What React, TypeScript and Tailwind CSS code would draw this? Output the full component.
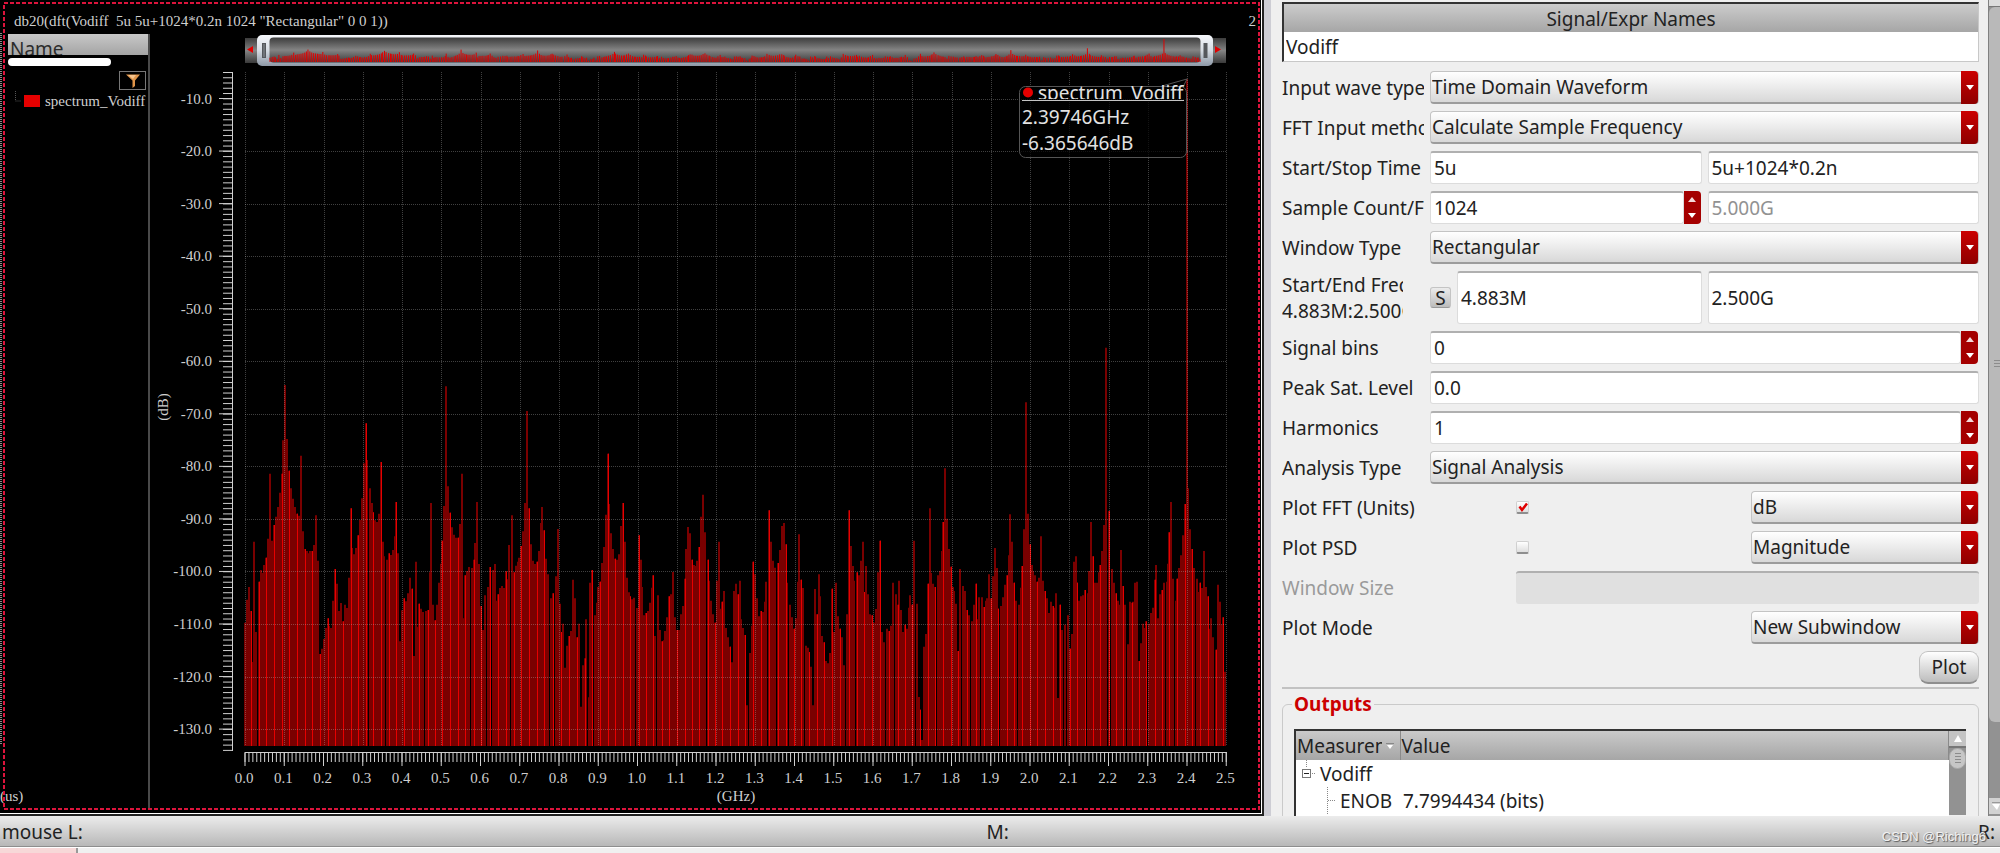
import React from "react";

/* Spectrum lines as "x:top" pairs in thirds of a chart unit, measured from (230, 330). */
const BINS = `45:875 52:806 58:768 62:840 68:993 73:632 79:903 86:752 92:717 96:726 102:702 108:680 114:623 120:428 126:629 131:582 137:557 143:528 149:485 155:428 160:328 165:162 171:324 177:419 183:472 189:503 195:528 200:548 206:554 212:374 218:601 224:654 231:660 235:667 241:660 247:660 253:642 259:553 263:689 269:969 275:953 281:924 287:891 293:862 297:884 303:891 309:809 316:714 322:758 328:840 332:816 338:871 344:821 350:831 356:740 362:532 366:651 373:670 379:651 385:613 391:567 397:502 401:397 407:277 412:387 420:472 426:516 430:544 436:568 442:573 448:548 454:393 460:632 463:676 470:686 476:667 483:672 489:657 495:616 499:513 505:667 511:931 517:838 523:802 529:811 534:787 540:740 546:773 552:975 558:692 563:887 567:818 573:833 580:843 587:840 593:837 599:724 602:516 608:821 614:868 620:821 627:755 632:698 637:629 643:525 649:166 655:466 661:545 666:589 671:611 677:620 684:620 690:579 697:428 700:862 706:733 712:720 718:708 725:711 731:686 735:636 741:513 747:699 753:825 759:897 766:793 774:768 781:708 788:717 794:699 797:809 804:790 810:771 817:765 823:771 829:721 832:745 838:642 845:553 851:724 857:704 863:692 868:680 873:645 879:601 885:516 891:240 897:532 902:640 908:689 914:699 921:692 927:660 933:576 937:528 942:598 948:683 955:730 962:802 968:787 977:736 984:594 989:818 994:903 998:878 1004:1010 1011:944 1018:915 1024:900 1030:746 1034:802 1040:919 1046:878 1052:1127 1059:1003 1065:982 1069:865 1076:1099 1081:755 1087:717 1094:853 1100:815 1104:768 1109:752 1115:696 1121:648 1129:551 1134:368 1137:519 1143:607 1149:654 1156:683 1162:686 1166:670 1172:585 1178:516 1184:632 1191:740 1197:784 1201:796 1207:805 1213:800 1220:831 1226:613 1232:686 1235:768 1242:853 1248:846 1254:840 1261:815 1267:770 1270:733 1276:915 1283:793 1289:897 1296:931 1302:928 1305:900 1312:859 1318:796 1323:790 1329:723 1335:859 1340:897 1346:897 1352:850 1358:825 1364:743 1368:654 1373:588 1379:607 1385:686 1391:702 1397:705 1402:689 1408:648 1414:557 1420:491 1426:604 1433:686 1436:749 1443:809 1449:850 1455:875 1461:749 1468:632 1471:833 1477:812 1483:780 1489:891 1495:919 1501:947 1506:994 1513:780 1519:758 1525:790 1531:749 1534:865 1539:891 1546:912 1552:1123 1560:966 1566:884 1569:692 1575:730 1581:802 1587:856 1594:840 1599:843 1604:812 1609:752 1616:538 1623:632 1629:689 1636:710 1643:696 1650:657 1656:585 1663:576 1669:640 1672:755 1679:821 1685:859 1691:893 1697:862 1704:752 1707:610 1714:746 1720:771 1727:944 1733:950 1736:963 1742:1007 1748:1123 1754:774 1760:850 1767:730 1770:796 1777:915 1783:934 1789:990 1795:997 1801:966 1805:773 1811:903 1817:755 1824:856 1830:893 1837:919 1843:1003 1851:850 1857:538 1864:645 1870:705 1873:749 1880:724 1887:733 1893:689 1899:632 1902:783 1908:705 1915:790 1921:850 1927:853 1933:875 1937:834 1943:724 1950:629 1956:903 1963:934 1970:893 1977:900 1984:884 1990:755 1997:790 2003:821 2006:749 2012:837 2018:903 2024:881 2030:893 2037:830 2041:793 2047:821 2053:629 2060:818 2066:1098 2071:1136 2075:1227 2081:947 2088:909 2095:758 2101:532 2103:726 2109:758 2116:768 2123:733 2129:720 2135:660 2138:573 2144:412 2150:563 2157:654 2163:707 2169:768 2173:780 2179:818 2185:960 2191:714 2198:765 2205:780 2211:837 2217:853 2226:871 2232:821 2238:758 2241:865 2248:799 2255:799 2261:828 2268:809 2272:802 2277:730 2283:802 2289:736 2295:651 2301:711 2305:833 2312:825 2318:799 2325:761 2331:733 2337:673 2340:550 2346:632 2352:755 2359:809 2366:821 2372:770 2375:705 2381:595 2387:214 2393:548 2399:640 2405:702 2408:720 2415:733 2422:752 2428:740 2434:616 2440:749 2444:780 2450:802 2456:846 2462:812 2468:825 2472:830 2478:787 2485:1101 2491:821 2497:897 2505:881 2513:853 2519:953 2526:909 2532:692 2538:676 2541:755 2547:809 2553:796 2560:793 2566:777 2573:787 2576:720 2582:573 2589:676 2595:755 2601:755 2607:724 2610:702 2617:660 2623:582 2629:50 2636:540 2638:657 2645:714 2652:755 2658:787 2664:809 2670:821 2673:657 2679:765 2686:821 2693:940 2699:812 2706:815 2709:812 2715:755 2720:752 2726:990 2733:937 2739:878 2742:891 2749:871 2756:878 2762:846 2768:830 2774:746 2777:702 2783:862 2790:790 2796:777 2803:755 2810:752 2813:698 2818:604 2824:513 2830:743 2837:809 2841:743 2847:711 2853:673 2859:613 2866:519 2871:-756 2875:472 2881:595 2887:654 2893:711 2900:743 2906:783 2911:755 2917:771 2922:660 2928:768 2934:796 2941:893 2943:862 2950:919 2957:956 2963:761 2970:812 2976:881 2979:859 2985:1022`
  .split(" ")
  .map((p) => p.split(":").map(Number))
  .map(([x, y]) => ({ x: 230 + x / 3, y: 330 + y / 3 }));

const FLOOR = 745;
const LEFT = 245;
const STEP_X = 39.25;
const TOP_10 = 97.5;
const STEP_Y = 52.55;

/* Every line is a dim pair of columns; every fourth also gets a full-strength core. */
const dimPath = BINS.map((b) => `M${Math.round(b.x)} ${b.y}V${FLOOR}`).join("");
const brightPath = BINS.filter((_, i) => i % 4 === 3)
  .map((b) => `M${Math.round(b.x) + 0.5} ${b.y}V${FLOOR}`)
  .join("");
const miniPath = BINS.map(
  (b) => `M${270 + (b.x - LEFT) * 0.949} ${61 - (FLOOR - b.y) * 0.0345}V61`
).join("");

const yMinor = Array.from({ length: 130 }, (_, i) => 71.5 + i * 5.255)
  .filter((y) => y < 750)
  .map((y) => `M223 ${y}H232`)
  .join("");
const yLabels = Array.from({ length: 13 }, (_, i) => i);
const xLabels = Array.from({ length: 26 }, (_, i) => i);
const xMinor = Array.from({ length: 251 }, (_, i) => `M${LEFT + i * 3.925} 752V761`).join("");
const xMajor = xLabels.map((i) => `M${LEFT + i * STEP_X} 752V765`).join("");
const yMajor = yLabels.map((i) => `M219 ${TOP_10 + i * STEP_Y}H232`).join("");
const vGrid = xLabels.map((i) => `M${Math.round(LEFT + i * STEP_X) + 0.5} 71V745`).join("");
const hGrid = yLabels.map((i) => `M245 ${Math.round(TOP_10 + i * STEP_Y) + 0.5}H1227`).join("");

const serif = "font-['Liberation_Serif',serif]";
const sans = "font-['Noto_Sans',sans-serif]";

function Chart() {
  return (
    <svg viewBox="154 28 1102 778" className="h-full w-full" role="img" aria-label="Spectrum of Vodiff">
      <defs>
        <linearGradient id="track" x1="0" y1="0" x2="0" y2="1">
          <stop offset="0" stopColor="#3c3c3c" />
          <stop offset="0.5" stopColor="#848484" />
          <stop offset="1" stopColor="#3a3a3a" />
        </linearGradient>
        <linearGradient id="frame" x1="0" y1="0" x2="0" y2="1">
          <stop offset="0" stopColor="#f6f8fc" />
          <stop offset="0.5" stopColor="#d5dbe2" />
          <stop offset="1" stopColor="#8d98a6" />
        </linearGradient>
        <clipPath id="nameClip">
          <rect x="1020" y="80" width="166" height="18" />
        </clipPath>
      </defs>

      <rect x="245" y="37" width="981" height="25" fill="url(#track)" />
      <path d="M253 45v7l-6-3.500z" fill="#e00000" />
      <path d="M1215 45v7l6-3.500z" fill="#e00000" />
      <rect x="257" y="34" width="956" height="31" rx="5" fill="url(#frame)" />
      <rect x="269.500" y="36.500" width="931" height="25" rx="4" fill="url(#track)" />
      <path d={miniPath} stroke="#e00000" strokeWidth="1" />
      <rect x="262" y="42" width="4" height="15" fill="#55585c" />
      <path d="M264 43v13" stroke="#8b9096" />
      <rect x="1203.500" y="42" width="4" height="15" fill="#55585c" />

      <path d={dimPath} stroke="#7a0000" strokeWidth="2" />
      <path d={brightPath} stroke="#e60000" strokeWidth="1" />
      <g stroke="#c8c8c8" strokeOpacity="0.32" strokeWidth="1" strokeDasharray="1 1">
        <path d={vGrid} />
        <path d={hGrid} />
      </g>

      <g stroke="#d0d0d0">
        <path d={yMinor} strokeWidth="1" />
        <path d={yMajor} strokeWidth="1" />
        <path d="M232.500 71V750" strokeWidth="1" />
        <path d={xMinor} strokeWidth="1" />
        <path d={xMajor} strokeWidth="1" />
        <path d="M244.500 751.500H1227" strokeWidth="1" />
      </g>

      <g fill="#cfcfcf" fontSize="15" className={serif}>
        {yLabels.map((i) => (
          <text key={i} x="212" y={TOP_10 + i * STEP_Y + 5} textAnchor="end">
            {`-${(i + 1) * 10}.0`}
          </text>
        ))}
        {xLabels.map((i) => (
          <text key={i} x={LEFT + i * STEP_X - 1} y="782" textAnchor="middle">
            {(i / 10).toFixed(1)}
          </text>
        ))}
        <text x="736" y="800" textAnchor="middle">(GHz)</text>
        <text transform="translate(168 406) rotate(-90)" textAnchor="middle">(dB)</text>
      </g>

      <path d="M1162 85L1187 78L1183 86" fill="none" stroke="#555" />
      <rect x="1019.500" y="85.500" width="167" height="71" rx="6" fill="#000" fillOpacity="0.7" stroke="#555" />
      <circle cx="1028" cy="91.500" r="5" fill="#e60000" />
      <g fill="#e2e2e2" fontSize="19" className={sans}>
        <text x="1038" y="99" clipPath="url(#nameClip)">spectrum_Vodiff</text>
        <text x="1022" y="123">2.39746GHz</text>
        <text x="1022" y="149">-6.365646dB</text>
      </g>
      <path d="M1022 99.500H1184" stroke="#c4c4c4" />
    </svg>
  );
}

const raised = "rounded border border-[#c4c4c4] border-b-2 border-b-[#9c9c9c] bg-linear-to-b from-white to-[#d8d8d8]";
const sunken =
  "min-w-0 rounded-[3px] border border-[#dcdcdc] border-t-2 border-t-[#b0b0b0] bg-white pl-[3px] text-[#222] outline-none";

function Select({ id, value }: { id: string; value: string }) {
  return (
    <div className="relative h-[33px] min-w-0 flex-1">
      <select id={id} defaultValue={value} className={`h-full w-full appearance-none pr-5 pl-px outline-none ${raised}`}>
        <option>{value}</option>
      </select>
      <span className="pointer-events-none absolute inset-y-0 right-px flex w-[17px] items-center justify-center rounded-r bg-linear-to-b from-[#cc0000] to-[#8e0000]">
        <svg viewBox="0 0 8 5" className="h-[5px] w-2">
          <path d="M0 0h8L4 5z" fill="#fff" />
        </svg>
      </span>
    </div>
  );
}

function Spin({ id, value }: { id: string; value: string }) {
  return (
    <div className="flex h-[33px] min-w-0 flex-1 pr-px">
      <input id={id} defaultValue={value} className={`flex-1 ${sunken}`} />
      <div className="flex w-[17px] flex-col rounded-r bg-[#a50000]">
        <button type="button" aria-label="Increase" className="flex flex-1 items-center justify-center">
          <svg viewBox="0 0 8 5" className="h-[5px] w-2">
            <path d="M0 5h8L4 0z" fill="#f4dada" />
          </svg>
        </button>
        <button type="button" aria-label="Decrease" className="flex flex-1 items-center justify-center">
          <svg viewBox="0 0 8 5" className="h-[5px] w-2">
            <path d="M0 0h8L4 5z" fill="#fff" />
          </svg>
        </button>
      </div>
    </div>
  );
}

function Row({ id, label, children }: { id: string; label: string; children: React.ReactNode }) {
  return (
    <div className="flex items-center gap-1.5">
      <label htmlFor={id} className="w-[142px] shrink-0 overflow-hidden whitespace-nowrap">
        {label}
      </label>
      {children}
    </div>
  );
}

function Pair({ children }: { children: React.ReactNode }) {
  return <div className="grid min-w-0 flex-1 grid-cols-2 gap-1.5">{children}</div>;
}

function Check({ id, checked = false }: { id: string; checked?: boolean }) {
  return (
    <span className="relative block size-[13px]">
      <input
        id={id}
        type="checkbox"
        defaultChecked={checked}
        className="peer block size-[13px] appearance-none rounded-[2px] border border-[#d0d0d0] border-b-2 border-b-[#8e8e8e] bg-linear-to-b from-white to-[#dedede]"
      />
      <svg viewBox="0 0 13 13" className="pointer-events-none absolute inset-0 hidden size-[13px] peer-checked:block">
        <path d="M3.500 5.500L6 9L11 2.500" fill="none" stroke="#e00000" strokeWidth="2.500" />
      </svg>
    </span>
  );
}

function UnitRow({ id, label, value, checked }: { id: string; label: string; value: string; checked?: boolean }) {
  return (
    <div className="flex items-center">
      <label htmlFor={id} className="w-[234px] shrink-0">
        {label}
      </label>
      <div className="flex flex-1">
        <Check id={id} checked={checked} />
      </div>
      <div className="flex w-[228px]">
        <Select id={`${id}-unit`} value={value} />
      </div>
    </div>
  );
}

export default function App() {
  return (
    <div className={`flex h-screen flex-col overflow-hidden bg-[#efefef] text-[19px] leading-[26px] text-[#222] ${sans}`}>
      <main className="flex min-h-0 flex-1">
        <section className="relative flex w-[63.2%] flex-col border-r-2 border-b-2 border-[#222] bg-black pr-1.5 pb-1.5 text-[#cfcfcf]">
          <svg className="pointer-events-none absolute inset-0 h-full w-full">
            <rect
              x="4"
              y="3"
              className="h-[calc(100%-8px)] w-[calc(100%-7px)]"
              fill="none"
              stroke="#dc143c"
              strokeWidth="2"
              strokeDasharray="4 2"
            />
            <path d="M1 33V745" stroke="#8a8a8a" strokeWidth="2" strokeDasharray="1 1" />
          </svg>
          <div className="absolute inset-y-0 right-0 w-px bg-white" />
          <div className="absolute inset-x-0 bottom-0 h-px bg-white" />
          <header className={`flex h-[34px] justify-between pt-[11px] pl-3.5 text-[15px] leading-5 ${serif}`}>
            <h1 className="whitespace-pre">{'db20(dft(Vodiff  5u 5u+1024*0.2n 1024 "Rectangular" 0 0 1))'}</h1>
            <span>2</span>
          </header>
          <div className="flex min-h-0 flex-1">
            <aside className="flex w-[150px] shrink-0 flex-col border-r-2 border-[#4a4a4a] pl-2">
              <div className="h-[21px] overflow-hidden bg-linear-to-b from-[#c8c8c8] to-[#a4a4a4] pt-0.5 pl-0.5 text-[#2c2c2c]">
                Name
              </div>
              <div className="mt-[3px] h-2 w-[103px] rounded-full bg-white" />
              <button aria-label="Filter" className="mt-[5px] mr-0.5 flex h-[19px] w-[27px] items-center justify-center self-end border border-[#777]">
                <svg viewBox="0 0 14 14" className="size-3.5">
                  <path d="M0 0.500h14L9 6.500V12L6.500 14V6.500z" fill="#e0954a" />
                  <path d="M2 1h8L7 5z" fill="#f6c48c" />
                </svg>
              </button>
              <div className="flex items-center pt-px">
                <svg viewBox="0 0 16 20" className="h-5 w-4">
                  <path d="M7.500 0v10h6" fill="none" stroke="#555" strokeDasharray="1 1" />
                </svg>
                <span className="h-3 w-4 bg-[#e60000]" />
                <span className={`pl-[5px] text-[15px] leading-5 ${serif}`}>spectrum_Vodiff</span>
              </div>
              <div className={`mt-auto -ml-2 pb-0.5 text-[15px] leading-5 ${serif}`}>(us)</div>
            </aside>
            <div className="-mt-1.5 min-w-0 flex-1 pl-1">
              <Chart />
            </div>
          </div>
        </section>

        <section className="flex min-w-0 flex-1 border-l-[7px] border-[#cdcdd4]">
          <form className="flex min-w-0 flex-1 flex-col gap-[7px] overflow-hidden pt-0.5 pr-[9px] pl-[11px]">
            <div className="mb-0.5 border-t-2 border-r border-b border-l-2 border-[#c8c8c8] border-t-[#333] border-l-[#333]">
              <div className="bg-linear-to-b from-[#cccccc] to-[#a6a6a6] pt-0.5 text-center">
                <label htmlFor="expr">Signal/Expr Names</label>
              </div>
              <input id="expr" defaultValue="Vodiff" className="block h-[29px] w-full bg-white pl-0.5 outline-none" />
            </div>
            <Row id="wave" label="Input wave type">
              <Select id="wave" value="Time Domain Waveform" />
            </Row>
            <Row id="method" label="FFT Input method">
              <Select id="method" value="Calculate Sample Frequency" />
            </Row>
            <Row id="start" label="Start/Stop Time">
              <Pair>
                <input id="start" defaultValue="5u" className={`h-[33px] ${sunken}`} />
                <input aria-label="Stop Time" defaultValue="5u+1024*0.2n" className={`h-[33px] ${sunken}`} />
              </Pair>
            </Row>
            <Row id="count" label="Sample Count/Freq">
              <Pair>
                <Spin id="count" value="1024" />
                <input
                  aria-label="Sample frequency"
                  disabled
                  defaultValue="5.000G"
                  className={`h-[33px] ${sunken} disabled:text-[#929292]`}
                />
              </Pair>
            </Row>
            <Row id="window" label="Window Type">
              <Select id="window" value="Rectangular" />
            </Row>
            <div className="flex items-center gap-1.5">
              <div className="w-[142px] shrink-0">
                <label htmlFor="fstart" className="block w-[121px] overflow-hidden whitespace-nowrap">
                  Start/End Freq
                  <br />
                  4.883M:2.500G
                </label>
              </div>
              <Pair>
                <div className="flex min-w-0 items-center gap-1.5">
                  <button type="button" className="flex size-[21px] items-center justify-center rounded-[3px] border border-[#c4c4c4] border-b-[#999] bg-linear-to-b from-[#ececec] to-[#bcbcbc]">
                    S
                  </button>
                  <input id="fstart" defaultValue="4.883M" className={`h-[53px] flex-1 ${sunken}`} />
                </div>
                <input aria-label="End frequency" defaultValue="2.500G" className={`h-[53px] ${sunken}`} />
              </Pair>
            </div>
            <Row id="bins" label="Signal bins">
              <Spin id="bins" value="0" />
            </Row>
            <Row id="peak" label="Peak Sat. Level">
              <input id="peak" defaultValue="0.0" className={`h-[33px] flex-1 ${sunken}`} />
            </Row>
            <Row id="harm" label="Harmonics">
              <Spin id="harm" value="1" />
            </Row>
            <Row id="analysis" label="Analysis Type">
              <Select id="analysis" value="Signal Analysis" />
            </Row>
            <UnitRow id="fft" label="Plot FFT (Units)" value="dB" checked />
            <UnitRow id="psd" label="Plot PSD" value="Magnitude" />
            <div className="flex items-center">
              <label htmlFor="size" className="w-[234px] shrink-0 text-[#9a9a9a]">
                Window Size
              </label>
              <input
                id="size"
                disabled
                className="h-[33px] min-w-0 flex-1 rounded-[3px] border-t-2 border-[#b0b0b0] bg-[#e0e0e0]"
              />
            </div>
            <div className="flex items-center justify-between">
              <label htmlFor="mode">Plot Mode</label>
              <div className="flex w-[228px]">
                <Select id="mode" value="New Subwindow" />
              </div>
            </div>
            <button
              type="button"
              className="flex h-[33px] w-[60px] shrink-0 items-center justify-center self-end rounded-[9px] border border-[#c0c0c0] border-b-2 border-b-[#8e8e8e] bg-linear-to-b from-white to-[#bdbdbd]"
            >
              Plot
            </button>
            <div className="-mt-1 h-0.5 shrink-0 bg-[#c2c2c2]" />
            <fieldset className="-mt-[5px] h-[240px] min-w-0 shrink-0 rounded-md border border-[#cacaca] pr-3 pl-[11px]">
              <legend className="-ml-0.5 px-0.5 font-bold text-[#cc0000]">Outputs</legend>
              <div className="mt-3 flex h-[200px] border-t-2 border-l-2 border-[#333]">
                <table className="w-full table-fixed border-collapse self-start bg-white text-left">
                  <thead>
                    <tr className="bg-linear-to-b from-[#cacaca] to-[#a6a6a6]">
                      <th className="h-[29px] w-[104px] border-r border-[#8a8a8a] p-0 pl-px font-normal">
                        <span className="flex items-center">
                          <span className="w-[85px] overflow-hidden">Measurement</span>
                          <svg viewBox="0 0 8 6" className="ml-1 h-1.5 w-2 shrink-0">
                            <path d="M0 .5h8" stroke="#888" />
                            <path d="M1 2h6L4 6z" fill="#fff" />
                          </svg>
                        </span>
                      </th>
                      <th className="border-r border-[#8a8a8a] p-0 pl-px font-normal">Value</th>
                    </tr>
                  </thead>
                  <tbody>
                    <tr>
                      <td className="h-[27px] p-0">
                        <span className="flex items-center">
                          <svg viewBox="0 0 24 27" className="h-[27px] w-6 shrink-0">
                            <path d="M10.500 0v8M16 13.500h4" stroke="#888" strokeDasharray="1 1" />
                            <rect x="6.500" y="9.500" width="8" height="8" fill="#fff" stroke="#777" />
                            <path d="M8 13.500h5" stroke="#222" />
                          </svg>
                          Vodiff
                        </span>
                      </td>
                      <td className="p-0" />
                    </tr>
                    <tr>
                      <td className="h-[27px] p-0">
                        <span className="flex items-center">
                          <svg viewBox="0 0 44 27" className="h-[27px] w-11 shrink-0">
                            <path d="M31.500 0v27M32 13.500h8" stroke="#888" strokeDasharray="1 1" />
                          </svg>
                          ENOB
                        </span>
                      </td>
                      <td className="p-0 pl-[3px]">7.7994434 (bits)</td>
                    </tr>
                    <tr>
                      <td className="h-[110px]" />
                      <td />
                    </tr>
                  </tbody>
                </table>
                <div className="h-[84px] w-[17px] shrink-0 bg-[#929292]">
                  <div className="flex h-[17px] items-center justify-center border-b-2 border-[#777] bg-[#c4c4c4]">
                    <svg viewBox="0 0 8 7" className="h-[7px] w-2">
                      <path d="M0 7h8L4 0z" fill="#fff" />
                    </svg>
                  </div>
                  <div className="flex h-[21px] items-center justify-center rounded-full border border-[#a8a8a8] bg-[#c6c6c6]">
                    <svg viewBox="0 0 6 11" className="h-[11px] w-1.5">
                      <path d="M0 .5h6M0 3.500h6M0 6.500h6M0 9.500h6" stroke="#8c8c8c" />
                    </svg>
                  </div>
                </div>
              </div>
            </fieldset>
          </form>
          <div className="flex w-3 shrink-0 flex-col border-l border-[#808080] bg-[#929292]">
            <div className="h-[7px] border-b border-[#777] bg-[#dcdcdc]" />
            <div className="flex h-[715px] items-center justify-end rounded-l-md bg-[#b9b9b9]">
              <svg viewBox="0 0 6 9" className="h-[9px] w-1.5">
                <path d="M0 .5h6M0 3.500h6M0 6.500h6" stroke="#8c8c8c" />
              </svg>
            </div>
            <div className="mt-auto mb-0.5 flex h-4 items-center justify-end bg-[#d2d2d2]">
              <svg viewBox="0 0 8 8" className="size-2">
                <path d="M0 .5h8" stroke="#999" />
                <path d="M0 2h8L5 8z" fill="#fff" />
              </svg>
            </div>
          </div>
        </section>
      </main>

      <footer className="shrink-0">
        <div className="relative flex h-[31px] items-center border-b border-[#8e8e8e] bg-linear-to-b from-[#ececec] to-[#b8b8b8] pt-0.5 pr-[5px] pl-0.5">
          <span className="w-[49.4%]">mouse L:</span>
          <span className="flex-1">M:</span>
          <span>R:</span>
          <span className="absolute right-3.5 bottom-0 font-['Liberation_Sans',sans-serif] text-[13px] leading-[19px] text-[#f2f2f2] [text-shadow:1px_1px_1px_#555]">
            CSDN @Riching6
          </span>
        </div>
        <div className="h-[6px] border-t border-white bg-[#f0f0f0]">
          <div className="h-full w-[78px] border-r-2 border-[#999] bg-[#f7d8d8]" />
        </div>
      </footer>
    </div>
  );
}
